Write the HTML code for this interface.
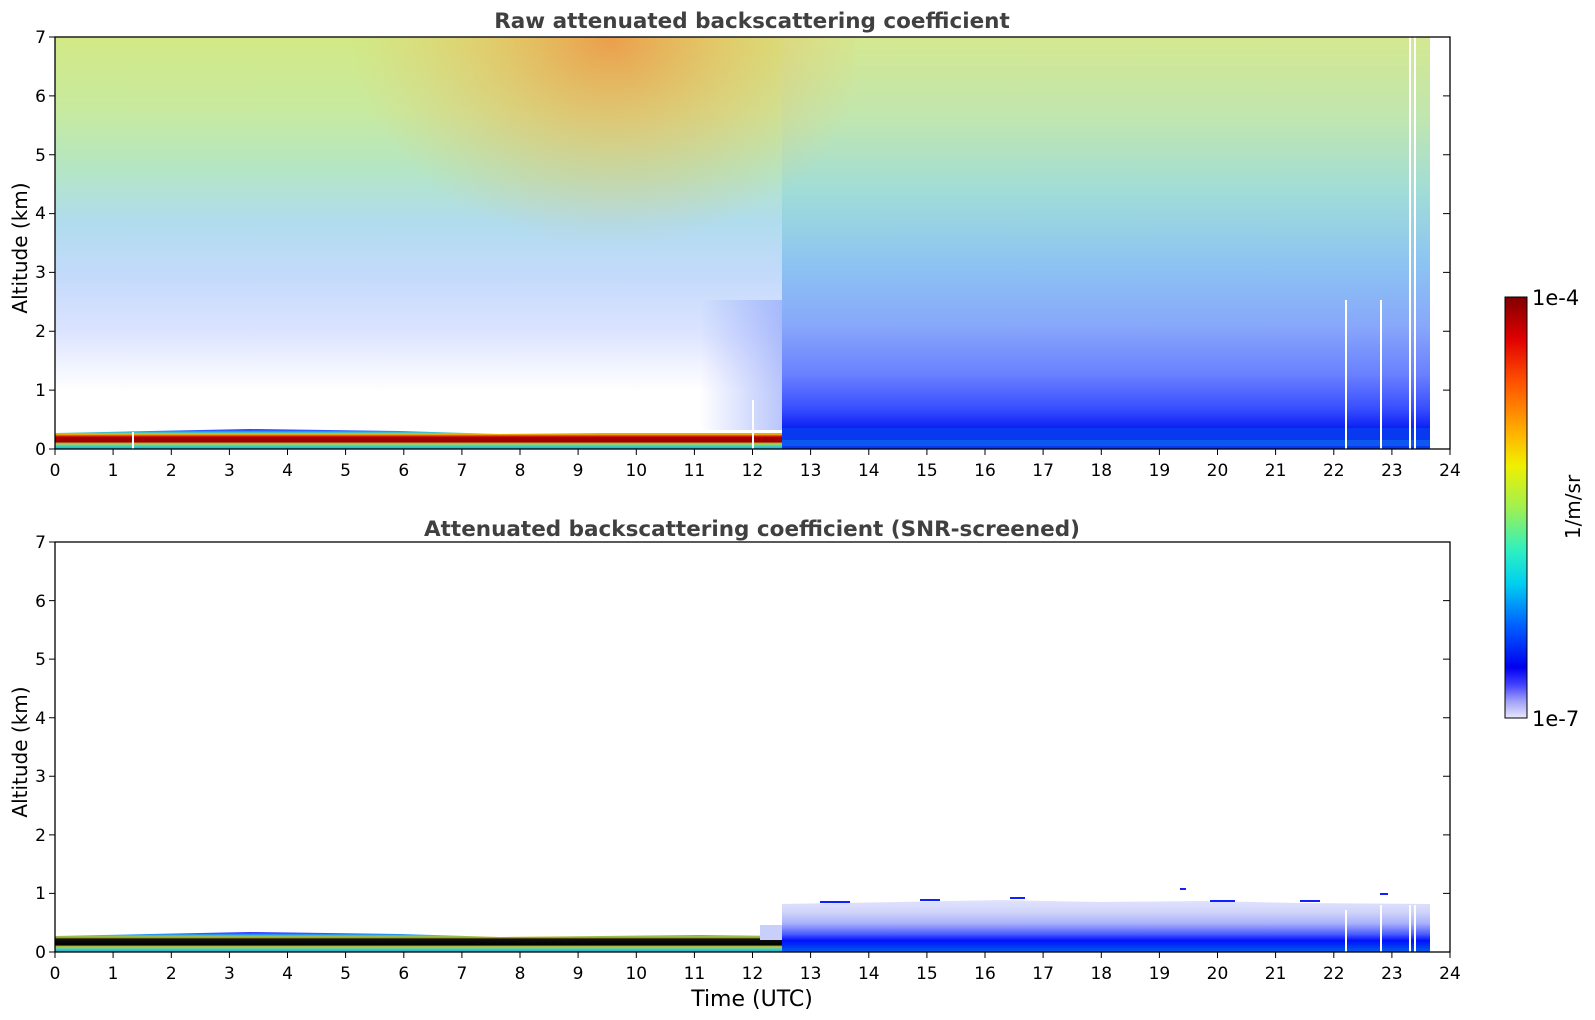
<!DOCTYPE html>
<html><head><meta charset="utf-8"><style>
html,body{margin:0;padding:0;background:#fff;width:1595px;height:1020px;overflow:hidden}
svg{display:block;font-family:"DejaVu Sans","Liberation Sans",sans-serif}
</style></head><body>
<svg width="1595" height="1020" viewBox="0 0 1595 1020" xmlns="http://www.w3.org/2000/svg">
<defs>
<linearGradient id="gl" x1="0" y1="37" x2="0" y2="449" gradientUnits="userSpaceOnUse">
<stop offset="0" stop-color="#d2e985"/><stop offset="0.18" stop-color="#c8eaa0"/>
<stop offset="0.32" stop-color="#b4e6c4"/><stop offset="0.45" stop-color="#b0dcee"/>
<stop offset="0.58" stop-color="#c4dafb"/><stop offset="0.72" stop-color="#dce4ff"/>
<stop offset="0.8" stop-color="#f2f4ff"/><stop offset="0.86" stop-color="#ffffff"/><stop offset="1" stop-color="#ffffff"/>
</linearGradient>
<linearGradient id="gr" x1="0" y1="37" x2="0" y2="449" gradientUnits="userSpaceOnUse">
<stop offset="0" stop-color="#d4e890"/><stop offset="0.2" stop-color="#c0e6b0"/>
<stop offset="0.38" stop-color="#a0dcd8"/><stop offset="0.55" stop-color="#8cc4f2"/>
<stop offset="0.7" stop-color="#88a8fa"/><stop offset="0.82" stop-color="#6a80ff"/>
<stop offset="0.9" stop-color="#3a50ff"/><stop offset="0.95" stop-color="#0a20f4"/><stop offset="1" stop-color="#0030e0"/>
</linearGradient>
<linearGradient id="gt" x1="700" y1="0" x2="782" y2="0" gradientUnits="userSpaceOnUse">
<stop offset="0" stop-color="#8aa0fa" stop-opacity="0"/><stop offset="1" stop-color="#8aa0fa" stop-opacity="0.6"/>
</linearGradient>
<radialGradient id="go" cx="610" cy="37" r="260" gradientUnits="userSpaceOnUse" gradientTransform="translate(610 37) scale(1 0.8) translate(-610 -37)">
<stop offset="0" stop-color="#f09040" stop-opacity="0.85"/><stop offset="0.5" stop-color="#f0b050" stop-opacity="0.45"/><stop offset="1" stop-color="#f0c060" stop-opacity="0"/>
</radialGradient>
<linearGradient id="band" x1="0" y1="430" x2="0" y2="449" gradientUnits="userSpaceOnUse">
<stop offset="0" stop-color="#3040ff"/><stop offset="0.12" stop-color="#20c0f0"/><stop offset="0.22" stop-color="#f0c000"/>
<stop offset="0.32" stop-color="#e02000"/><stop offset="0.4" stop-color="#a00000"/><stop offset="0.62" stop-color="#a00000"/>
<stop offset="0.72" stop-color="#c0d040"/><stop offset="0.85" stop-color="#40d0c0"/><stop offset="1" stop-color="#20a0e0"/>
</linearGradient>
<linearGradient id="band2" x1="0" y1="933" x2="0" y2="952" gradientUnits="userSpaceOnUse">
<stop offset="0" stop-color="#3040ff"/><stop offset="0.12" stop-color="#20c0f0"/><stop offset="0.22" stop-color="#e0c000"/>
<stop offset="0.32" stop-color="#101010"/><stop offset="0.62" stop-color="#000"/>
<stop offset="0.72" stop-color="#c0d040"/><stop offset="0.85" stop-color="#40d0c0"/><stop offset="1" stop-color="#20a0e0"/>
</linearGradient>
<linearGradient id="gb2" x1="0" y1="895" x2="0" y2="952" gradientUnits="userSpaceOnUse">
<stop offset="0" stop-color="#e8eaff"/><stop offset="0.3" stop-color="#d0d4fa"/><stop offset="0.5" stop-color="#a8b0fa"/>
<stop offset="0.68" stop-color="#5060ff"/><stop offset="0.8" stop-color="#0010ff"/><stop offset="0.92" stop-color="#0040f0"/><stop offset="1" stop-color="#0060e8"/>
</linearGradient>
<linearGradient id="cb" x1="0" y1="297" x2="0" y2="718" gradientUnits="userSpaceOnUse">
<stop offset="0" stop-color="#800000"/><stop offset="0.1" stop-color="#e00000"/><stop offset="0.2" stop-color="#ff5000"/>
<stop offset="0.32" stop-color="#ffb000"/><stop offset="0.4" stop-color="#f0f000"/><stop offset="0.5" stop-color="#a0f050"/>
<stop offset="0.6" stop-color="#30f0c0"/><stop offset="0.68" stop-color="#00d0f0"/><stop offset="0.78" stop-color="#0060ff"/>
<stop offset="0.88" stop-color="#0000f0"/><stop offset="0.92" stop-color="#4040ff"/><stop offset="0.96" stop-color="#a0a0f8"/><stop offset="1" stop-color="#e8e8fc"/>
</linearGradient>
</defs>

<!-- TOP PLOT -->
<text x="752" y="28" text-anchor="middle" font-size="21.5" font-weight="bold" fill="#404040">Raw attenuated backscattering coefficient</text>
<rect x="55" y="37" width="727" height="412" fill="url(#gl)"/>
<rect x="782" y="37" width="648" height="412" fill="url(#gr)"/>
<rect x="700" y="300" width="82" height="130" fill="url(#gt)"/>
<rect x="55" y="37" width="800" height="320" fill="url(#go)"/>
<path d="M55 433 L150 431 L250 429 L400 431 L500 434 L600 433 L700 433 L782 433 L782 449 L55 449Z" fill="url(#band)"/>
<rect x="782" y="428" width="648" height="21" fill="#0838f0"/>
<rect x="782" y="440" width="648" height="6" fill="#1070f0" opacity="0.6"/>
<g fill="#fff"><rect x="1345" y="300" width="2" height="149"/><rect x="1380" y="300" width="2" height="149"/><rect x="1409" y="37" width="2" height="412"/><rect x="1414" y="37" width="2" height="412"/><rect x="132" y="432" width="2" height="17"/><rect x="752" y="400" width="2" height="49"/></g>
<rect x="55" y="37" width="1395" height="412" fill="none" stroke="#000" stroke-width="1.3"/>

<!-- BOTTOM PLOT -->
<text x="752" y="536" text-anchor="middle" font-size="21.5" font-weight="bold" fill="#404040">Attenuated backscattering coefficient (SNR-screened)</text>
<path d="M55 936 L150 934 L250 932 L400 934 L500 937 L600 936 L700 935 L782 936 L782 952 L55 952Z" fill="url(#band2)"/>
<path d="M782 904 L900 902 L1000 900 L1100 902 L1200 901 L1300 903 L1430 904 L1430 952 L782 952Z" fill="url(#gb2)"/>
<rect x="760" y="925" width="22" height="15" fill="#c8d0fa"/>
<g fill="#1020ff"><rect x="820" y="901" width="30" height="2"/><rect x="920" y="899" width="20" height="2"/><rect x="1010" y="897" width="15" height="2"/><rect x="1180" y="888" width="6" height="2"/><rect x="1210" y="900" width="25" height="2"/><rect x="1300" y="900" width="20" height="2"/><rect x="1380" y="893" width="8" height="2"/></g>
<g fill="#fff"><rect x="1345" y="910" width="2" height="42"/><rect x="1380" y="905" width="2" height="47"/><rect x="1409" y="905" width="2" height="47"/><rect x="1414" y="905" width="2" height="47"/></g>
<rect x="55" y="542" width="1395" height="410" fill="none" stroke="#000" stroke-width="1.3"/>

<!-- ticks -->
<g stroke="#000" stroke-width="1">
<path d="M55 449v6M113.1 449v6M171.3 449v6M229.4 449v6M287.5 449v6M345.6 449v6M403.8 449v6M461.9 449v6M520 449v6M578.1 449v6M636.3 449v6M694.4 449v6M752.5 449v6M810.6 449v6M868.8 449v6M926.9 449v6M985 449v6M1043.1 449v6M1101.3 449v6M1159.4 449v6M1217.5 449v6M1275.6 449v6M1333.8 449v6M1391.9 449v6M1450 449v6"/>
<path d="M55 952v6M113.1 952v6M171.3 952v6M229.4 952v6M287.5 952v6M345.6 952v6M403.8 952v6M461.9 952v6M520 952v6M578.1 952v6M636.3 952v6M694.4 952v6M752.5 952v6M810.6 952v6M868.8 952v6M926.9 952v6M985 952v6M1043.1 952v6M1101.3 952v6M1159.4 952v6M1217.5 952v6M1275.6 952v6M1333.8 952v6M1391.9 952v6M1450 952v6"/>
<path d="M49 449h6M49 390.1h6M49 331.3h6M49 272.4h6M49 213.6h6M49 154.7h6M49 95.9h6M49 37h6 M1443 390.1h7M1443 331.3h7M1443 272.4h7M1443 213.6h7M1443 154.7h7M1443 95.9h7"/>
<path d="M49 952h6M49 893.4h6M49 834.9h6M49 776.3h6M49 717.7h6M49 659.1h6M49 600.6h6M49 542h6 M1443 893.4h7M1443 834.9h7M1443 776.3h7M1443 717.7h7M1443 659.1h7M1443 600.6h7"/>
</g>
<g font-size="17" fill="#000" text-anchor="middle">
<text y="476"><tspan x="55">0</tspan><tspan x="113.1">1</tspan><tspan x="171.3">2</tspan><tspan x="229.4">3</tspan><tspan x="287.5">4</tspan><tspan x="345.6">5</tspan><tspan x="403.8">6</tspan><tspan x="461.9">7</tspan><tspan x="520">8</tspan><tspan x="578.1">9</tspan><tspan x="636.3">10</tspan><tspan x="694.4">11</tspan><tspan x="752.5">12</tspan><tspan x="810.6">13</tspan><tspan x="868.8">14</tspan><tspan x="926.9">15</tspan><tspan x="985">16</tspan><tspan x="1043.1">17</tspan><tspan x="1101.3">18</tspan><tspan x="1159.4">19</tspan><tspan x="1217.5">20</tspan><tspan x="1275.6">21</tspan><tspan x="1333.8">22</tspan><tspan x="1391.9">23</tspan><tspan x="1450">24</tspan></text>
<text y="979"><tspan x="55">0</tspan><tspan x="113.1">1</tspan><tspan x="171.3">2</tspan><tspan x="229.4">3</tspan><tspan x="287.5">4</tspan><tspan x="345.6">5</tspan><tspan x="403.8">6</tspan><tspan x="461.9">7</tspan><tspan x="520">8</tspan><tspan x="578.1">9</tspan><tspan x="636.3">10</tspan><tspan x="694.4">11</tspan><tspan x="752.5">12</tspan><tspan x="810.6">13</tspan><tspan x="868.8">14</tspan><tspan x="926.9">15</tspan><tspan x="985">16</tspan><tspan x="1043.1">17</tspan><tspan x="1101.3">18</tspan><tspan x="1159.4">19</tspan><tspan x="1217.5">20</tspan><tspan x="1275.6">21</tspan><tspan x="1333.8">22</tspan><tspan x="1391.9">23</tspan><tspan x="1450">24</tspan></text>
</g>
<g font-size="17" fill="#000" text-anchor="end">
<text x="46" y="455">0</text><text x="46" y="396">1</text><text x="46" y="337">2</text><text x="46" y="278">3</text><text x="46" y="219">4</text><text x="46" y="161">5</text><text x="46" y="102">6</text><text x="46" y="43">7</text>
<text x="46" y="958">0</text><text x="46" y="899">1</text><text x="46" y="841">2</text><text x="46" y="782">3</text><text x="46" y="724">4</text><text x="46" y="665">5</text><text x="46" y="607">6</text><text x="46" y="548">7</text>
</g>
<text transform="translate(27 248) rotate(-90)" text-anchor="middle" font-size="20">Altitude (km)</text>
<text transform="translate(27 752) rotate(-90)" text-anchor="middle" font-size="20">Altitude (km)</text>
<text x="752" y="1006" text-anchor="middle" font-size="22">Time (UTC)</text>

<!-- colorbar -->
<rect x="1505" y="297" width="22" height="421" fill="url(#cb)" stroke="#000" stroke-width="1"/>
<text x="1532" y="305" font-size="21">1e-4</text>
<text x="1532" y="726" font-size="21">1e-7</text>
<text transform="translate(1580 507) rotate(-90)" text-anchor="middle" font-size="20">1/m/sr</text>
</svg>
</body></html>
